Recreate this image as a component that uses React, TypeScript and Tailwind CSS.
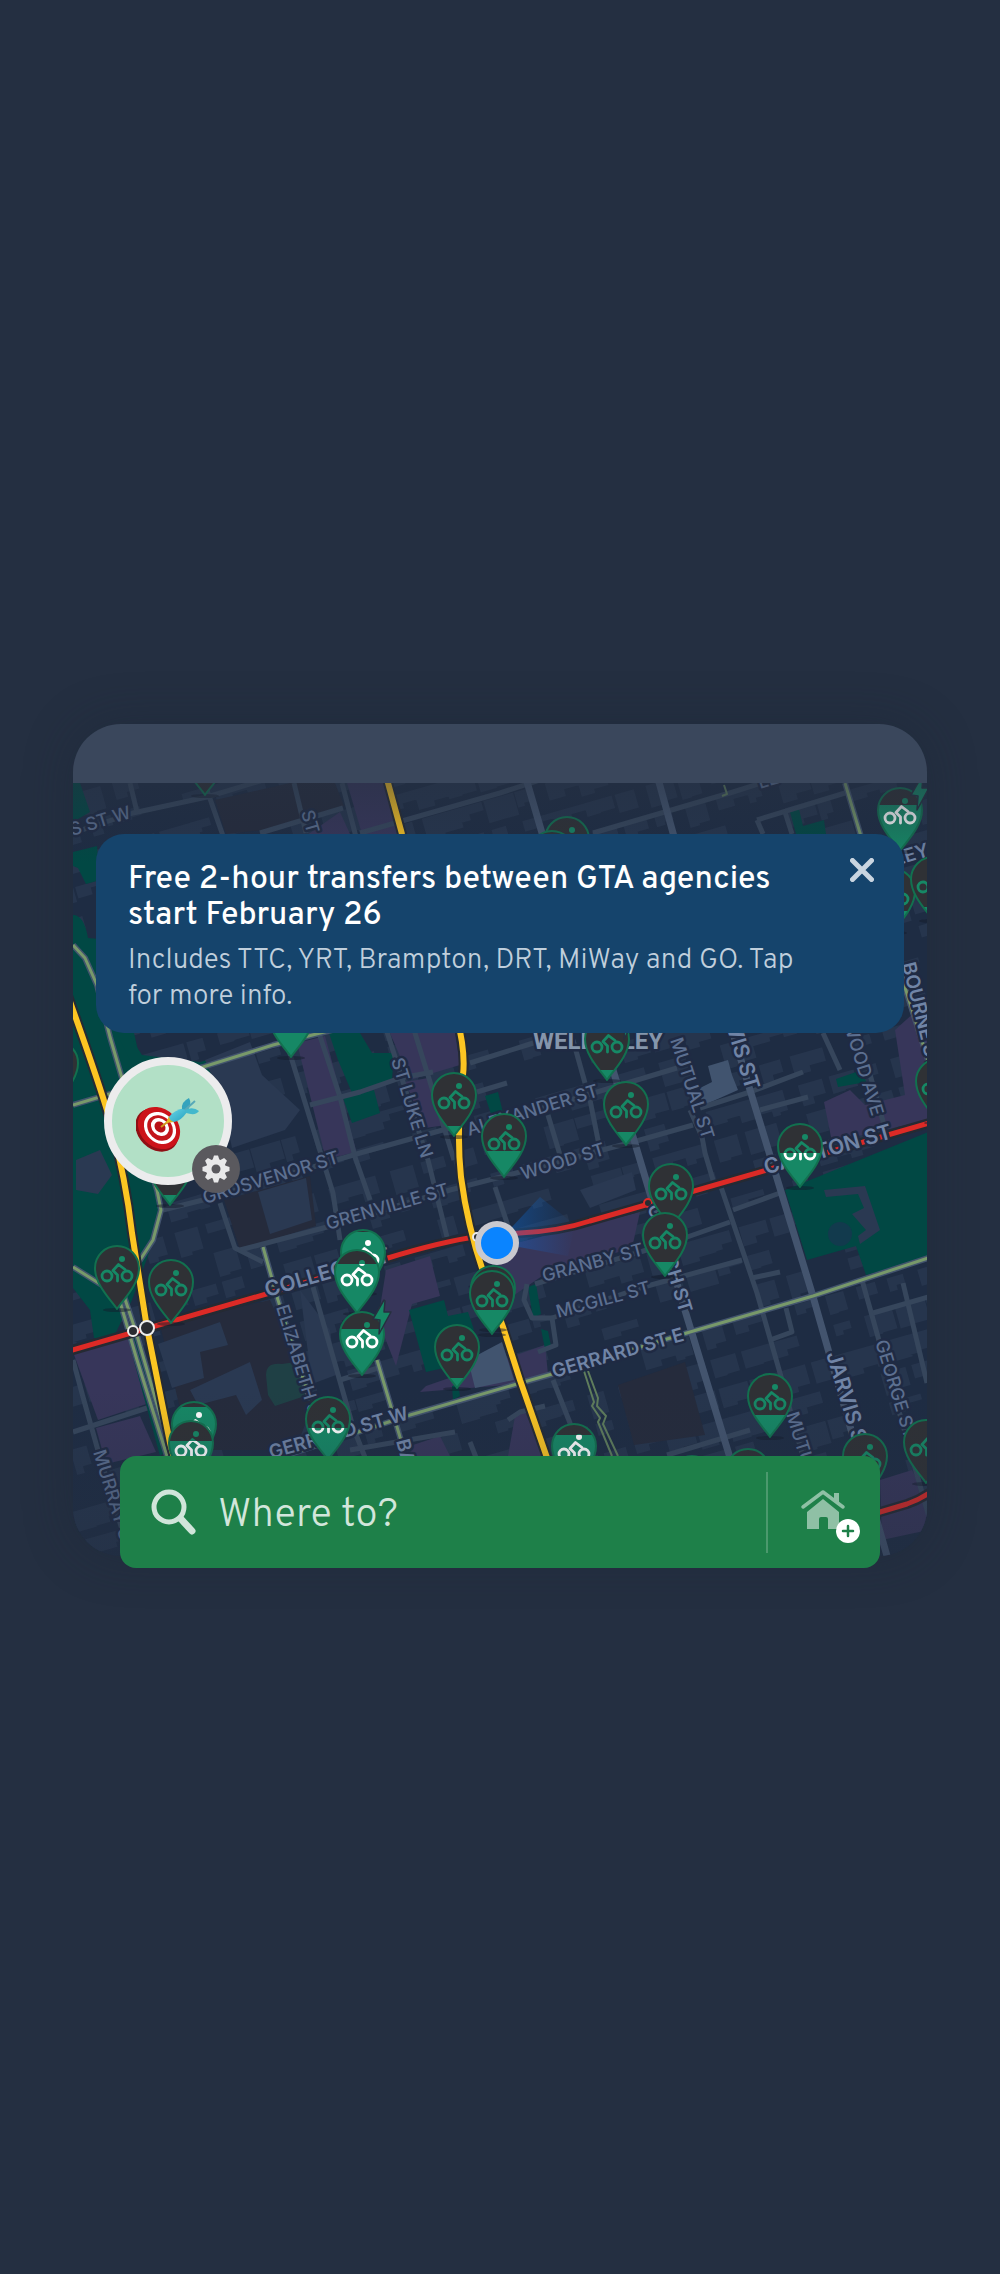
import React, { useId } from "react";

type Point = [number, number];

const line = (pts: Point[]) => "M" + pts.map((p) => p.join(" ")).join("L");

/* ---------- Map data ---------- */

const parks: string[] = [
  "M73 783L80 783L90 812L73 822Z",
  "M73 852L97 846L100 880L86 884L78 868L73 866Z",
  "M73 915Q84 915 88 938L110 940L135 1037L150 1105L164 1190L150 1250L132 1300L112 1340L94 1338L90 1310L73 1288Z",
  "M118 1036H130L142 1055L200 1062L240 1050L215 1075L150 1100Z",
  "M329 1033H360L372 1053H394L392 1080L352 1093L338 1060Z",
  "M343 1098L374 1090L380 1113L352 1123Z",
  "M485 1096L498 1092L504 1117L493 1120Z",
  "M409 1310L444 1300L448 1316L468 1312L474 1330L450 1340L457 1365L426 1372Z",
  "M528 1287L536 1284L541 1314L533 1318Z",
  "M541 1329L548 1331L551 1346L545 1349Z",
  "M785 1190L820 1176L928 1132V1259L866 1275L856 1246L807 1260Z",
  "M790 812L799 809L803 826L824 820L826 834H796Z",
  "M836 1079L862 1070L866 1082L838 1087Z",
  "M452 1386L458 1384L460 1396L453 1400Z",
  "M127 1335L135 1333L168 1450L160 1456Z",
];

const campuses: string[] = [
  "M347 783L388 783L400 834H362Z",
  "M300 840L340 812L350 834Z",
  "M297 1043L325 1036L356 1150L326 1160Z",
  "M390 1033H455L460 1065L410 1080Z",
  "M405 1082L428 1078L447 1125L425 1128Z",
  "M340 1120L346 1118L352 1153L340 1156Z",
  "M386 1270L430 1256L440 1296L412 1304L396 1366L378 1320Z",
  "M488 1250L640 1212L632 1248L545 1274L510 1298Z",
  "M73 1352L128 1338L146 1404L98 1420Z",
  "M96 1428L140 1416L156 1452L106 1464Z",
  "M426 1386L545 1345L548 1374L520 1384L420 1392Z",
  "M515 1416L525 1412L545 1456H508Z",
  "M410 1446L440 1436L450 1456H412Z",
  "M824 1102L850 1090L865 1105L905 1095L895 1030L928 1000V1120L832 1142Z",
  "M880 1480L912 1470L928 1500V1530L882 1540Z",
];

const darkBlocks: string[] = [
  "M224 1200L310 1176L316 1226L240 1250Z",
  "M160 1325L270 1300L315 1400L295 1450L190 1450Z",
  "M618 1385L685 1362L705 1435L634 1445Z",
  "M215 800L290 783L335 783L344 806L262 830L226 834Z",
];

const paleBlocks: string[] = [
  "M708 1066L728 1060L732 1075L738 1090L702 1106L700 1088L712 1082Z",
  "M468 1360L502 1342L514 1380L475 1388Z",
  "M824 1190L865 1186L880 1230L860 1244L858 1236L866 1230L852 1214L864 1208L858 1194L826 1197Z",
  "M205 1060L250 1042L262 1075L300 1110L285 1130L232 1148L222 1100Z",
  "M76 1160L100 1150L112 1175L98 1194L76 1190Z",
  "M158 1344L220 1322L228 1345L200 1352L204 1378L172 1388Z",
  "M190 1390L250 1362L262 1400L246 1415L236 1395L198 1405Z",
  "M258 1192L306 1178L312 1220L270 1234Z",
  "M580 1190L632 1172L636 1190L590 1208Z",
  "M300 1290L330 1330L336 1375L312 1384Z",
];

const minorRoads: Point[][] = [
  [[342, 783], [355, 833], [415, 1033], [454, 1160]],
  [[200, 770], [222, 833], [291, 1057], [333, 1193], [340, 1240]],
  [[313, 1287], [353, 1427], [370, 1470]],
  [[380, 1010], [428, 1160], [447, 1237]],
  [[318, 1030], [340, 1097], [355, 1157], [370, 1200]],
  [[823, 1033], [840, 1070]],
  [[866, 1060], [884, 1125]],
  [[220, 1203], [235, 1248], [263, 1262]],
  [[553, 1380], [570, 1423], [585, 1470]],
  [[73, 1360], [83, 1397], [97, 1447], [130, 1556]],
  [[573, 1040], [585, 1083]],
  [[548, 1115], [560, 1155]],
  [[590, 1100], [600, 1150]],
  [[495, 1187], [508, 1226]],
  [[130, 783], [137, 812]],
  [[294, 783], [306, 833]],
  [[785, 812], [792, 834]],
  [[757, 820], [763, 834]],
  [[690, 1110], [702, 1137], [705, 1153], [713, 1180]],
  [[721, 1187], [757, 1293], [780, 1373], [830, 1556]],
  [[862, 1280], [878, 1337], [940, 1556]],
  [[903, 1283], [927, 1383]],
  [[73, 833], [133, 813], [207, 797], [290, 772]],
  [[260, 833], [343, 808]],
  [[360, 833], [500, 793], [540, 780]],
  [[593, 833], [733, 792], [790, 774]],
  [[757, 820], [845, 793]],
  [[310, 1105], [360, 1092], [400, 1078], [433, 1072]],
  [[470, 1063], [527, 1045], [580, 1028]],
  [[163, 1210], [203, 1200], [360, 1153], [450, 1128]],
  [[240, 1250], [327, 1227], [450, 1190], [520, 1172], [640, 1140], [693, 1125]],
  [[477, 1092], [507, 1083]],
  [[470, 1130], [597, 1092], [677, 1068]],
  [[700, 1108], [750, 1092], [803, 1072]],
  [[760, 1110], [808, 1097]],
  [[733, 1210], [780, 1193]],
  [[535, 1284], [673, 1242], [730, 1222]],
  [[552, 1318], [640, 1288], [742, 1260]],
  [[752, 1278], [780, 1272]],
  [[667, 1455], [750, 1430]],
  [[73, 1432], [147, 1408]],
  [[873, 1313], [928, 1297]],
  [[527, 1284], [524, 1300], [532, 1318], [552, 1318], [556, 1345], [538, 1352]],
  [[770, 1340], [792, 1332], [786, 1308]],
  [[340, 1380], [378, 1368]],
  [[350, 1450], [455, 1432]],
  [[470, 1442], [477, 1460]],
  [[508, 1420], [520, 1412], [545, 1406]],
];

const majorRoads: Point[][] = [
  [[657, 775], [673, 833], [750, 1090], [812, 1293], [887, 1556]],
  [[525, 775], [542, 833], [640, 1160], [687, 1317], [760, 1556]],
];

const bikeways: Point[][] = [
  [[73, 945], [85, 958], [97, 985], [110, 1037], [124, 1085], [157, 1190], [161, 1210], [153, 1240], [140, 1260], [118, 1290]],
  [[73, 1267], [97, 1282], [118, 1295], [137, 1360], [167, 1456]],
  [[124, 1296], [136, 1332], [172, 1456]],
  [[73, 1105], [113, 1093], [203, 1067], [273, 1045], [340, 1028]],
  [[240, 1470], [340, 1438], [410, 1415], [517, 1384], [552, 1374], [690, 1332], [813, 1296], [928, 1258]],
  [[845, 783], [860, 833], [890, 940], [928, 1060]],
  [[263, 1247], [278, 1300], [310, 1400]],
  [[377, 1360], [400, 1437], [408, 1460]],
];

const thinTrails: Point[][] = [
  [[584, 1371], [594, 1402], [592, 1406], [600, 1418], [598, 1422], [612, 1456]],
  [[588, 1371], [598, 1398], [597, 1406], [606, 1416], [603, 1424], [618, 1456]],
  [[724, 785], [727, 794], [722, 796]],
];

const transit: { color: string; d: string }[] = [
  { color: "#dc2a26", d: "M66 1352L280 1290L388 1258Q440 1242 480 1236L520 1233Q560 1231 590 1221L767 1170L936 1121" },
  { color: "#dc2a26", d: "M870 1515L907 1504Q922 1499 936 1488" },
  { color: "#fcc522", d: "M66 990L73 1010Q98 1080 110 1120Q126 1180 132 1233L147 1328L170 1443L180 1480" },
  { color: "#fcc522", d: "M385 772L402 834L455 1010Q466 1050 463 1075Q456 1130 461 1177Q468 1230 486 1280L503 1327L520 1380L553 1475" },
];

interface Pin { x: number; y: number; level: number; bolt?: boolean }

const pins: Pin[] = [
  { x: 205, y: 795, level: 0 },
  { x: 567, y: 880, level: 0 },
  { x: 552, y: 894, level: 0 },
  { x: 900, y: 851, level: 46, bolt: true },
  { x: 893, y: 932, level: 21 },
  { x: 933, y: 920, level: 13 },
  { x: 291, y: 1057, level: 40 },
  { x: 56, y: 1104, level: 0 },
  { x: 170, y: 1205, level: 10 },
  { x: 117, y: 1309, level: 0 },
  { x: 171, y: 1323, level: 0 },
  { x: 454, y: 1136, level: 10 },
  { x: 504, y: 1177, level: 26 },
  { x: 607, y: 1080, level: 10, bolt: true },
  { x: 626, y: 1145, level: 13 },
  { x: 363, y: 1293, level: 61 },
  { x: 357, y: 1313, level: 49 },
  { x: 362, y: 1375, level: 46, bolt: true },
  { x: 493, y: 1329, level: 0 },
  { x: 492, y: 1334, level: 24 },
  { x: 457, y: 1388, level: 10 },
  { x: 800, y: 1187, level: 34 },
  { x: 671, y: 1227, level: 0 },
  { x: 665, y: 1276, level: 14 },
  { x: 938, y: 1122, level: 0 },
  { x: 194, y: 1465, level: 58 },
  { x: 191, y: 1484, level: 43 },
  { x: 328, y: 1460, level: 32 },
  { x: 574, y: 1487, level: 52 },
  { x: 770, y: 1437, level: 22 },
  { x: 692, y: 1519, level: 0 },
  { x: 748, y: 1512, level: 0 },
  { x: 865, y: 1497, level: 0 },
  { x: 926, y: 1483, level: 0 },
];

interface Street { text: string; x: number; y: number; angle: number; kind?: "medium" | "large"; end?: boolean }

const streets: Street[] = [
  { text: "S ST W", x: 72, y: 836, angle: -17 },
  { text: "ST", x: 301, y: 812, angle: 74 },
  { text: "LE", x: 760, y: 789, angle: -17 },
  { text: "GROSVENOR ST", x: 205, y: 1204, angle: -17 },
  { text: "GRENVILLE ST", x: 328, y: 1230, angle: -16 },
  { text: "ALEXANDER ST", x: 469, y: 1136, angle: -17 },
  { text: "WOOD ST", x: 523, y: 1180, angle: -17 },
  { text: "ST LUKE LN", x: 391, y: 1060, angle: 73 },
  { text: "GRANBY ST", x: 544, y: 1282, angle: -15 },
  { text: "MCGILL ST", x: 558, y: 1318, angle: -15 },
  { text: "GERRARD ST E", x: 554, y: 1378, angle: -16, kind: "medium" },
  { text: "GERRARD ST W", x: 271, y: 1459, angle: -16, kind: "medium" },
  { text: "COLLEGE ST", x: 267, y: 1297, angle: -16, kind: "large" },
  { text: "CARLTON ST", x: 893, y: 1138, angle: -16, kind: "large", end: true },
  { text: "MUTUAL ST", x: 670, y: 1040, angle: 72 },
  { text: "JARVIS ST", x: 746, y: 1091, angle: 73, kind: "large", end: true },
  { text: "HOMEWOOD AVE", x: 872, y: 1117, angle: 73, end: true },
  { text: "BOURNE ST", x: 902, y: 964, angle: 76, kind: "medium" },
  { text: "LEY ST", x: 896, y: 866, angle: -17, kind: "medium" },
  { text: "JARVIS ST", x: 826, y: 1354, angle: 73, kind: "large" },
  { text: "GEORGE ST", x: 875, y: 1342, angle: 73 },
  { text: "MUTUAL ST", x: 786, y: 1414, angle: 73 },
  { text: "ELIZABETH ST", x: 276, y: 1307, angle: 73 },
  { text: "MURRAY ST", x: 93, y: 1452, angle: 73 },
  { text: "CHURCH ST", x: 680, y: 1314, angle: 73, kind: "medium", end: true },
  { text: "BAY ST", x: 396, y: 1441, angle: 75, kind: "medium" },
];

const labelSize = { small: 18, medium: 19, large: 21 };

/* City blocks: small footprints scattered along the slanted street grid. */
function makeBuildings() {
  let seed = 17;
  const rnd = () => {
    seed = (seed * 16807) % 2147483647;
    return seed / 2147483647;
  };
  const shapes: string[] = [];
  for (let v = -640; v < 680; v += 30) {
    for (let u = -560; u < 560; u += 32) {
      const r = rnd();
      const w = 14 + Math.round(rnd() * 26);
      const h = 10 + Math.round(rnd() * 16);
      if (r < 0.2) continue;
      const notch = Math.round(rnd() * 7);
      shapes.push(`M${u} ${v}h${w}v${h - notch}h${-Math.round(w / 2)}v${notch}h${-(w - Math.round(w / 2))}Z`);
    }
  }
  return shapes.join("");
}
const buildings = makeBuildings();

/* ---------- Map pieces ---------- */

const PIN = "M0 0C-6 -9 -22 -24 -22 -41A22 22 0 0 1 22 -41C22 -24 6 -9 0 0Z";

function Cyclist({ color }: { color: string }) {
  return (
    <g fill="none" stroke={color} strokeWidth="2.8" strokeLinecap="round" strokeLinejoin="round">
      <circle cx="-10" cy="-33" r="5" />
      <circle cx="10" cy="-33" r="5" />
      <path d="M0.5 -28V-34L-4 -38.5L1.5 -44.5L8 -39.5" />
      <circle cx="5" cy="-50" r="3" fill={color} stroke="none" />
    </g>
  );
}

function BikePin({ x, y, level, bolt }: Pin) {
  const id = useId();
  return (
    <g transform={`translate(${x} ${y})`}>
      <clipPath id={id}>
        <rect x="-24" y={-level} width="48" height={level} />
      </clipPath>
      <ellipse cx="0" cy="1" rx="14" ry="2" fill="#131c2b" opacity=".5" />
      <path d={PIN} fill="#2f3135" />
      <Cyclist color="#168865" />
      <g clipPath={`url(#${id})`}>
        <path d={PIN} fill="#168865" />
        {level > 28 && <Cyclist color="#ffffff" />}
      </g>
      <path d={PIN} fill="none" stroke="#12704f" strokeWidth="2" strokeLinejoin="round" />
      {bolt && (
        <path d="M22 -75L11 -56L18 -55L17 -41L29 -63L22 -63L23 -74Z" fill="#168865" stroke="#26303f" strokeWidth="1.5" strokeLinejoin="round" />
      )}
    </g>
  );
}

function CityMap() {
  return (
    <svg
      className="block h-full w-full"
      viewBox="73 783 854 773"
      preserveAspectRatio="xMidYMid slice"
      role="img"
      aria-label="Map of downtown Toronto with bike share stations"
    >
      <defs>
        <linearGradient id="fade-top" x1="0" y1="0" x2="0" y2="1">
          <stop offset="0" stopColor="#263041" stopOpacity=".5" />
          <stop offset="1" stopColor="#242f41" stopOpacity="0" />
        </linearGradient>
        <linearGradient id="fade-bottom" x1="0" y1="0" x2="0" y2="1">
          <stop offset="0" stopColor="#242f41" stopOpacity="0" />
          <stop offset="1" stopColor="#242f41" stopOpacity=".4" />
        </linearGradient>
        <linearGradient id="beam" x1="0" y1="0" x2="1" y2="0">
          <stop offset="0" stopColor="#0a6fe0" stopOpacity=".45" />
          <stop offset="1" stopColor="#0a6fe0" stopOpacity="0" />
        </linearGradient>
      </defs>
      <rect x="73" y="783" width="854" height="773" fill="#1e2c43" />
      <path d={buildings} fill="#293850" opacity=".75" transform="translate(500 1150) rotate(-16)" />
      {darkBlocks.map((d) => <path key={d} d={d} fill="#252b3c" />)}
      {campuses.map((d) => <path key={d} d={d} fill="#37365a" />)}
      {parks.map((d) => <path key={d} d={d} fill="#014844" />)}
      {paleBlocks.map((d, i) => <path key={d} d={d} fill={i < 2 ? "#41546f" : "#2a3952"} />)}
      <circle cx="840" cy="1234" r="12" fill="#123a4d" />
      <path d="M266 1375Q266 1362 282 1364L296 1362L305 1396L275 1406L268 1395Z" fill="#1f4045" />
      <g fill="none" strokeLinejoin="round">
        {minorRoads.map((p, i) => <path key={i} d={line(p)} stroke="#36465c" strokeWidth="5" />)}
        {majorRoads.map((p, i) => <path key={i} d={line(p)} stroke="#43546e" strokeWidth="7" />)}
        {bikeways.map((p, i) => (
          <g key={i}>
            <path d={line(p)} stroke="#43546e" strokeWidth="6" />
            <path d={line(p)} stroke="#78996a" strokeWidth="3" />
          </g>
        ))}
        {thinTrails.map((p, i) => <path key={i} d={line(p)} stroke="#5f7d5c" strokeWidth="2" />)}
        {transit.map((t, i) => (
          <g key={i}>
            <path d={t.d} stroke="#252a33" strokeWidth="10" />
            <path d={t.d} stroke={t.color} strokeWidth={i < 2 ? 5 : 6} />
          </g>
        ))}
      </g>
      <g fill="#292c31" stroke="#eceded" strokeWidth="2">
        <circle cx="133" cy="1331" r="5" />
        <circle cx="147" cy="1328" r="7" />
        <circle cx="477" cy="1237" r="4" />
      </g>
      <circle cx="648" cy="1203" r="4" fill="#292c31" stroke="#dc2a26" strokeWidth="2" />
      <g fontFamily='Inter, "Liberation Sans", sans-serif' stroke="#1f2a43" strokeWidth="5" strokeLinejoin="round" paintOrder="stroke">
        {streets.map((s, i) => (
          <text
            key={i}
            transform={`translate(${s.x} ${s.y}) rotate(${s.angle})`}
            textAnchor={s.end ? "end" : "start"}
            fontSize={labelSize[s.kind ?? "small"]}
            fontWeight={s.kind ? 600 : 500}
            fill={s.kind ? "#7084a6" : "#5c6f90"}
          >
            {s.text}
          </text>
        ))}
        <text x="533" y="1049" fontFamily='Roboto, "Liberation Sans", sans-serif' fontSize="24" fontWeight="700" fill="#8596ac">
          WELLESLEY
        </text>
      </g>
      {pins.map((p, i) => <BikePin key={i} {...p} />)}
      <rect x="73" y="783" width="854" height="80" fill="url(#fade-top)" />
      <rect x="73" y="1390" width="854" height="166" fill="url(#fade-bottom)" />
      <path d="M497 1243L540 1197L575 1225L568 1256Z" fill="url(#beam)" />
      <circle cx="497" cy="1243" r="22" fill="#c9c9d0" />
      <circle cx="497" cy="1243" r="16" fill="#0a84ff" />
    </svg>
  );
}

/* ---------- Icons ---------- */

function DartBoard() {
  return (
    <svg className="size-16" viewBox="0 0 64 64" aria-hidden="true">
      <defs>
        <linearGradient id="flight" x1="0" y1="0" x2="1" y2="1">
          <stop offset="0" stopColor="#6bd6e6" />
          <stop offset="1" stopColor="#23a0c0" />
        </linearGradient>
      </defs>
      <ellipse cx="21" cy="41" rx="19" ry="24" fill="#8f0f14" transform="rotate(-45 21 41)" />
      <ellipse cx="23" cy="39" rx="19" ry="23" fill="#cc1319" transform="rotate(-45 23 39)" />
      <ellipse cx="24" cy="39" rx="14.500" ry="17.500" fill="#fff" transform="rotate(-45 24 39)" />
      <ellipse cx="24" cy="39" rx="11.500" ry="14" fill="#c3151b" transform="rotate(-45 24 39)" />
      <ellipse cx="24" cy="38" rx="8" ry="10" fill="#fff" transform="rotate(-45 24 38)" />
      <ellipse cx="24" cy="38" rx="5" ry="6" fill="#b91217" transform="rotate(-45 24 38)" />
      <path d="M25 38L34 31" stroke="#d09a1c" strokeWidth="2" />
      <path d="M30 34L33 27L38 33Z" fill="#e5b51e" />
      <path d="M33 28Q38 21 49 19L51 23Q45 32 38 33Q34 32 33 28Z" fill="url(#flight)" />
      <path d="M46 20Q45 13 53 9Q56 14 52 21Z" fill="#35a3bd" />
      <path d="M49 21L59 12" stroke="#58a9b8" strokeWidth="2" />
      <path d="M49 21Q57 17 63 22Q60 27 50 24Z" fill="#43b8cc" />
    </svg>
  );
}

function Gear() {
  return (
    <svg className="size-7" viewBox="-14 -14 28 28" aria-hidden="true">
      {[0, 45, 90, 135].map((a) => (
        <path key={a} d="M-3.500 -9L-2 -13.500H2L3.500 -9V9L2 13.500H-2L-3.500 9Z" fill="#e9e9ea" transform={`rotate(${a})`} />
      ))}
      <circle r="10" fill="#e9e9ea" />
      <circle r="4.500" fill="#5a595e" />
    </svg>
  );
}

/* ---------- Screen ---------- */

export default function App() {
  return (
    <main className="flex min-h-screen items-center bg-[#242f41] px-[73px] pt-[18px] font-[Overpass,'Noto_Sans','Liberation_Sans',sans-serif]">
      <section className="relative w-full">
        <div className="absolute inset-x-0 top-0 bottom-3 flex flex-col overflow-hidden rounded-[48px] shadow-[0_0_48px_#1b253460]">
          <div className="h-[59px] shrink-0 bg-[#3a475c]" />
          <div className="min-h-0 flex-1">
            <CityMap />
          </div>
        </div>

        <div className="relative flex flex-col pt-[110px]">
          <aside className="mx-[23px] flex items-start justify-between rounded-[28px] bg-[#15446c] pt-7 pr-[30px] pb-[18px] pl-8">
            <div className="max-w-[680px]">
              <h1 className="text-[32px] leading-9 font-medium text-white">
                Free 2-hour transfers between GTA agencies start February 26
              </h1>
              <p className="mt-[9px] text-[28px] leading-9 font-light text-[#c0cfdc]">
                Includes TTC, YRT, Brampton, DRT, MiWay and GO. Tap for more info.
              </p>
            </div>
            <button type="button" aria-label="Dismiss" className="-mt-1 text-[#c9d5e0]">
              <svg className="size-6" viewBox="0 0 24 24" fill="none" stroke="currentColor" strokeWidth="5" strokeLinecap="round" aria-hidden="true">
                <path d="M2.500 2.500L21.500 21.500M21.500 2.500L2.500 21.500" />
              </svg>
            </button>
          </aside>

          <div className="relative mt-6 ml-[31px] size-32">
            <button type="button" aria-label="Favourite place" className="flex size-32 items-center justify-center rounded-full border-8 border-[#ececed] bg-[#b2e0c6]">
              <DartBoard />
            </button>
            <button type="button" aria-label="Settings" className="absolute -right-2 -bottom-2 flex size-12 items-center justify-center rounded-full bg-[#5a595e]">
              <Gear />
            </button>
          </div>

          <form className="mx-[47px] mt-[271px] flex h-28 items-center rounded-2xl bg-[#1e8049] pl-[30px]" onSubmit={(e) => e.preventDefault()}>
            <label htmlFor="destination" className="shrink-0 text-[#d0e5da]">
              <span className="sr-only">Destination</span>
              <svg className="size-12" viewBox="0 0 48 48" fill="none" stroke="currentColor" strokeLinecap="round" aria-hidden="true">
                <circle cx="19" cy="19" r="15" strokeWidth="5" />
                <path d="M31 31L42 43" strokeWidth="7" />
              </svg>
            </label>
            <input
              id="destination"
              type="text"
              placeholder="Where to?"
              className="ml-5 h-full min-w-0 flex-1 bg-transparent pt-2 text-[40px] font-light text-white outline-none placeholder:text-[#d2e6db]"
            />
            <button type="button" aria-label="Set home" className="flex h-[81px] w-[114px] shrink-0 items-center border-l-2 border-[#4b996d] pt-2 pl-8">
              <svg className="h-[54px] w-[60px]" viewBox="0 0 60 54" aria-hidden="true">
                <g fill="#8fc0a5">
                  <path d="M7 40V23L23 10L39 23V40H28V30Q28 28 26 28H21Q19 28 19 30V40Z" />
                  <path d="M34 4H39V16L34 12Z" />
                </g>
                <path d="M3 18L23 3L43 18" fill="none" stroke="#8fc0a5" strokeWidth="3.500" strokeLinecap="round" strokeLinejoin="round" />
                <circle cx="48" cy="42" r="12" fill="#fff" />
                <path d="M48 37V47M43 42H53" stroke="#1e8049" strokeWidth="2.500" strokeLinecap="round" />
              </svg>
            </button>
          </form>
        </div>
      </section>
    </main>
  );
}
